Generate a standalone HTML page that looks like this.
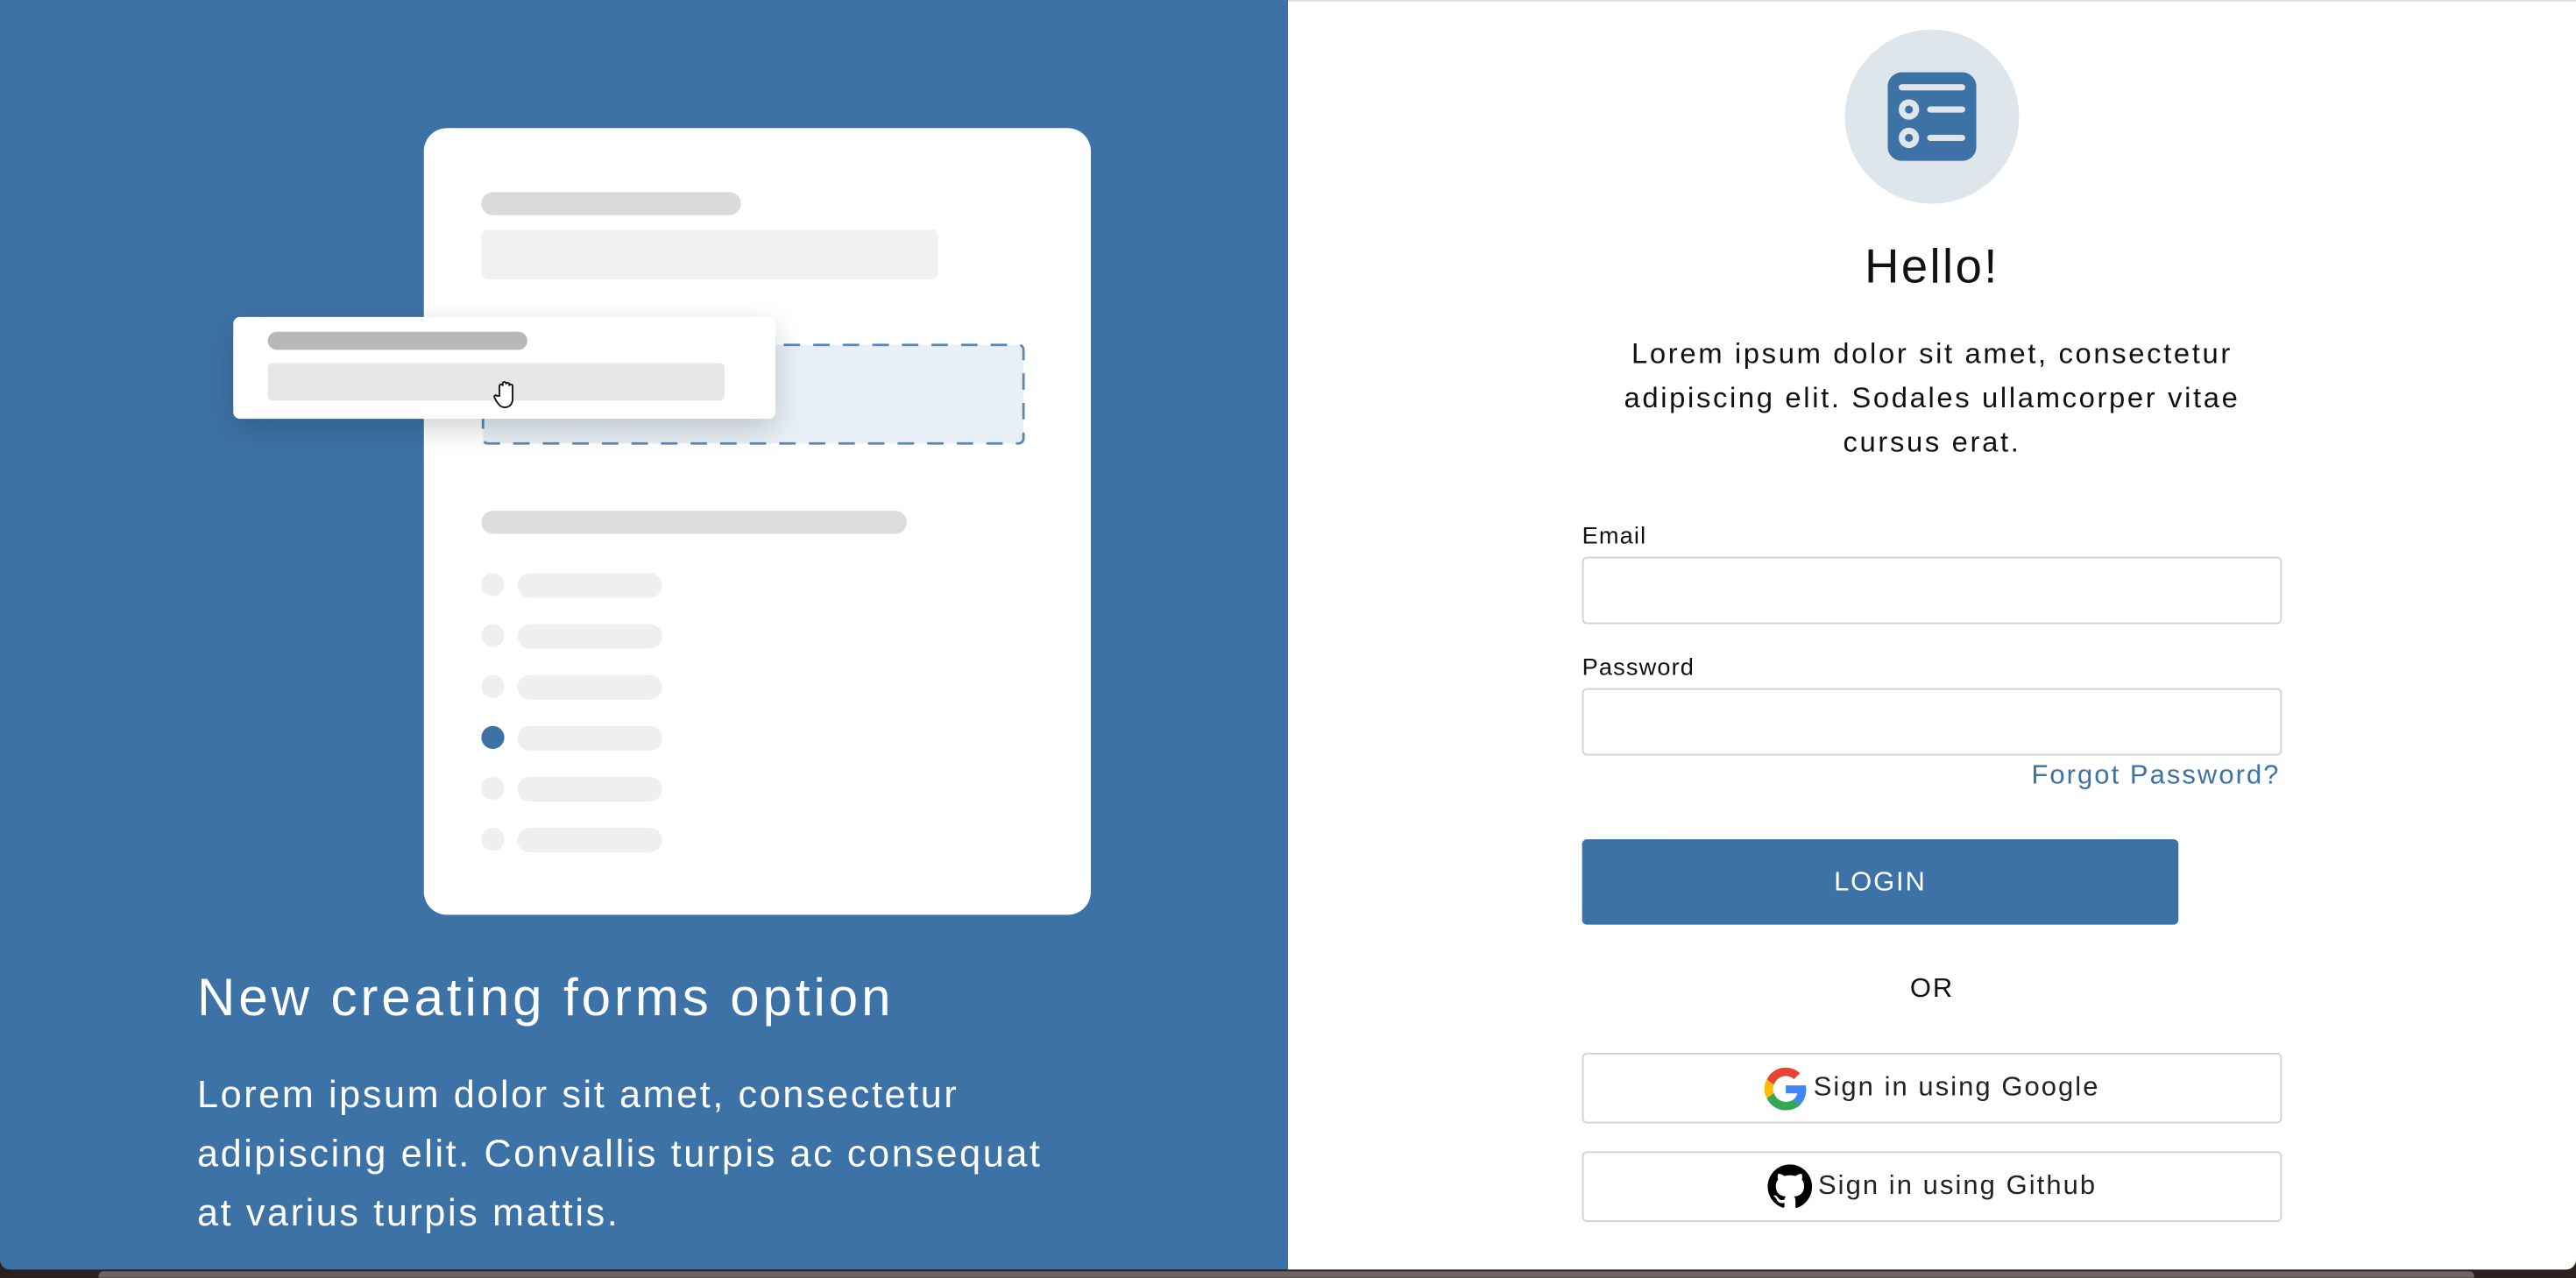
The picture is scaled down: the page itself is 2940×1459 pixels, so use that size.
<!DOCTYPE html>
<html><head><meta charset="utf-8"><style>
html,body{margin:0;padding:0;width:2940px;height:1458px;overflow:hidden;background:#2b1f1f;}
#w{position:absolute;left:0;top:0;width:1568px;height:778px;transform:scale(1.875);transform-origin:0 0;font-family:"Liberation Sans",sans-serif;}
.a{position:absolute;}
.bar{position:absolute;border-radius:8px;}
.inp{position:absolute;left:963px;width:424px;height:39px;border:1px solid #cfd3d7;border-radius:3px;background:#fff;}
.lbl{position:absolute;left:963px;font-size:14.5px;color:#111;letter-spacing:.6px;}
.btn{position:absolute;left:963px;width:424px;height:41px;border:1px solid #cfd3d7;border-radius:3px;background:#fff;display:flex;align-items:center;justify-content:center;font-size:16.5px;color:#222;gap:4px;letter-spacing:1.1px;}
</style></head><body><div id="w">
<div class="a" style="left:0;top:0;width:784px;height:773px;background:#3d72a6;border-bottom-left-radius:6px;"></div>
<div class="a" style="left:784px;top:0;width:784px;height:773px;background:#fff;border-top:1px solid #ddd;box-sizing:border-box;border-bottom-right-radius:6px;"></div>
<div class="a" style="left:60px;top:774px;width:1446px;height:4px;background:#6e6262;border-radius:3px 3px 0 0;"></div>

<div class="a" style="left:258px;top:78px;width:406px;height:479px;background:#fff;border-radius:14px;"></div>
<div class="bar" style="left:293px;top:117px;width:158px;height:14px;background:#dadada;"></div>
<div class="a" style="left:293px;top:140px;width:278px;height:30px;background:#f0f0f0;border-radius:4px;"></div>
<svg class="a" style="left:293px;top:209px" width="331" height="62" viewBox="0 0 331 62"><rect x="1" y="1" width="329" height="60" rx="3" fill="#e8eff6" stroke="#5a87b5" stroke-width="1.5" stroke-dasharray="10 8"/></svg>
<div class="a" style="left:142px;top:193px;width:330px;height:62px;background:#fff;border-radius:4px;box-shadow:0 6px 18px rgba(0,0,0,.18);"></div>
<div class="bar" style="left:163px;top:202px;width:158px;height:11px;background:#b8b8b8;"></div>
<div class="a" style="left:163px;top:221px;width:278px;height:23px;background:#e6e6e6;border-radius:3px;"></div>
<svg class="a" style="left:300px;top:231px" width="16" height="19" viewBox="0 0 16 19"><path d="M4 10V4a1 1 0 0 1 2 0V2.5a1 1 0 0 1 2 0V3a1 1 0 0 1 2 0v1a1 1 0 0 1 2 0v8c0 3-2 5-4.5 5S4 16 2 13l-1-2c-.5-1 .8-1.8 1.5-1z" fill="#fff" stroke="#111" stroke-width="1"/></svg>
<div class="bar" style="left:293px;top:311px;width:259px;height:14px;background:#dcdcdc;"></div>
<div class="a" style="left:293px;top:349px;">
<div class="a" style="left:0;top:0;width:14px;height:14px;border-radius:50%;background:#efefef"></div><div class="bar" style="left:22px;top:0;width:88px;height:15px;background:#efefef"></div>
<div class="a" style="left:0;top:31px;width:14px;height:14px;border-radius:50%;background:#efefef"></div><div class="bar" style="left:22px;top:31px;width:88px;height:15px;background:#efefef"></div>
<div class="a" style="left:0;top:62px;width:14px;height:14px;border-radius:50%;background:#efefef"></div><div class="bar" style="left:22px;top:62px;width:88px;height:15px;background:#efefef"></div>
<div class="a" style="left:0;top:93px;width:14px;height:14px;border-radius:50%;background:#3d72a6"></div><div class="bar" style="left:22px;top:93px;width:88px;height:15px;background:#efefef"></div>
<div class="a" style="left:0;top:124px;width:14px;height:14px;border-radius:50%;background:#efefef"></div><div class="bar" style="left:22px;top:124px;width:88px;height:15px;background:#efefef"></div>
<div class="a" style="left:0;top:155px;width:14px;height:14px;border-radius:50%;background:#efefef"></div><div class="bar" style="left:22px;top:155px;width:88px;height:15px;background:#efefef"></div>
</div>
<div class="a" style="left:120px;top:589px;color:#fff;font-size:32px;letter-spacing:2.1px;white-space:nowrap;">New creating forms option</div>
<div class="a" style="left:120px;top:648px;color:#fff;font-size:23px;line-height:36px;letter-spacing:1.4px;white-space:nowrap;">Lorem ipsum dolor sit amet, consectetur<br>adipiscing elit. Convallis turpis ac consequat<br>at varius turpis mattis.</div>

<div class="a" style="left:1123px;top:18px;width:106px;height:106px;border-radius:50%;background:#dee5eb;"></div>
<svg class="a" style="left:1149px;top:44px" width="54" height="54" viewBox="0 0 100 100"><rect width="100" height="100" rx="16" fill="#3d72a6"/><g stroke="#dee5eb" stroke-width="7" stroke-linecap="round" fill="none"><line x1="16" y1="17" x2="84" y2="17"/><line x1="48" y1="42" x2="84" y2="42"/><line x1="48" y1="74" x2="84" y2="74"/><circle cx="24" cy="42" r="8"/><circle cx="24" cy="74" r="8"/></g></svg>
<div class="a" style="left:976px;top:147px;width:400px;text-align:center;font-size:29px;color:#111;letter-spacing:1.3px;">Hello!</div>
<div class="a" style="left:926px;top:202px;width:500px;text-align:center;font-size:17.5px;line-height:27px;color:#111;letter-spacing:1.4px;">Lorem ipsum dolor sit amet, consectetur<br>adipiscing elit. Sodales ullamcorper vitae<br>cursus erat.</div>
<div class="lbl" style="top:319px;">Email</div>
<div class="inp" style="top:339px;"></div>
<div class="lbl" style="top:399px;">Password</div>
<div class="inp" style="top:419px;"></div>
<div class="a" style="left:1138px;top:463px;width:250px;text-align:right;color:#3d72a6;font-size:16.5px;letter-spacing:1.1px;">Forgot Password?</div>
<div class="a" style="left:963px;top:511px;width:363px;height:52px;background:#3d72a6;border-radius:3px;color:#fff;font-size:16.5px;letter-spacing:1px;display:flex;align-items:center;justify-content:center;">LOGIN</div>
<div class="a" style="left:1076px;top:593px;width:200px;text-align:center;font-size:16.5px;color:#111;letter-spacing:1px;">OR</div>
<div class="btn" style="top:641px;"><svg width="26" height="26" viewBox="0 0 48 48"><path fill="#EA4335" d="M24 9.5c3.5 0 6.6 1.2 9.1 3.6l6.8-6.8C35.8 2.4 30.2 0 24 0 14.6 0 6.6 5.4 2.7 13.3l7.9 6.1C12.5 13.7 17.8 9.5 24 9.5z"/><path fill="#4285F4" d="M46.9 24.5c0-1.6-.1-3.1-.4-4.5H24v9h12.9c-.6 3-2.3 5.5-4.8 7.2l7.7 6c4.5-4.2 7.1-10.4 7.1-17.7z"/><path fill="#FBBC05" d="M10.5 28.6c-.5-1.4-.8-3-.8-4.6s.3-3.2.8-4.6l-7.9-6.1C1 16.5 0 20.1 0 24s1 7.5 2.7 10.7l7.8-6.1z"/><path fill="#34A853" d="M24 48c6.5 0 11.9-2.1 15.9-5.8l-7.7-6c-2.2 1.5-5 2.3-8.2 2.3-6.2 0-11.5-4.2-13.4-9.9l-7.9 6.1C6.6 42.6 14.6 48 24 48z"/></svg>Sign in using Google</div>
<div class="btn" style="top:701px;"><svg width="27" height="27" viewBox="0 0 16 16"><path fill="#000" d="M8 0C3.58 0 0 3.58 0 8c0 3.54 2.29 6.53 5.47 7.59.4.07.55-.17.55-.38v-1.33c-2.23.48-2.7-1.07-2.7-1.07-.36-.92-.89-1.17-.89-1.17-.73-.5.05-.49.05-.49.8.06 1.23.83 1.23.83.72 1.23 1.88.87 2.34.67.07-.52.28-.87.51-1.07-1.78-.2-3.64-.89-3.64-3.95 0-.87.31-1.59.82-2.15-.08-.2-.36-1.02.08-2.12 0 0 .67-.21 2.2.82.64-.18 1.32-.27 2-.27s1.36.09 2 .27c1.53-1.04 2.2-.82 2.2-.82.44 1.1.16 1.92.08 2.12.51.56.82 1.27.82 2.15 0 3.07-1.87 3.75-3.65 3.95.29.25.54.73.54 1.48v2.2c0 .21.15.46.55.38A8.01 8.01 0 0 0 16 8c0-4.42-3.580-8-8-8z"/></svg>Sign in using Github</div>
</div></body></html>
